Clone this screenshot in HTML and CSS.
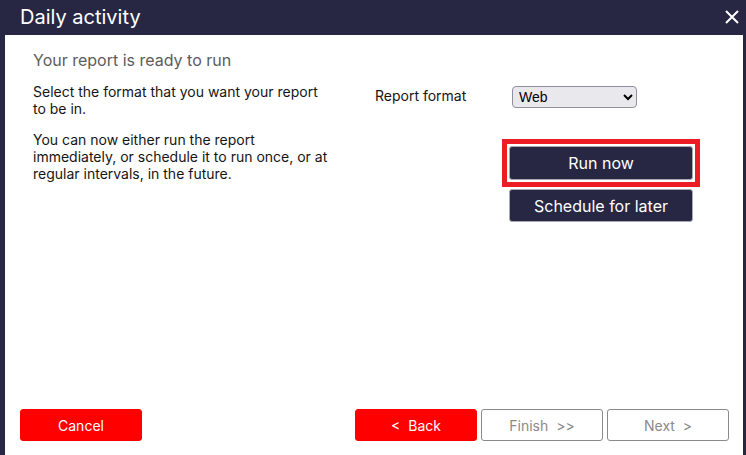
FILE: index.html
```html
<!DOCTYPE html>
<html lang="en">

<head>
    <meta charset="UTF-8">
    <meta name="viewport" content="width=device-width, initial-scale=1.0">
    <title>Daily activity</title>
    <link rel="stylesheet" href="styles.css">
</head>

<body>
    <div class="dialog">
        <div class="dialog-header">
            <h1 class="dialog-title">Daily activity</h1>
            <button class="close-btn" type="button" aria-label="Close">
                <svg width="14" height="14" viewBox="0 0 14 14">
                    <path d="M1 1 L13 13 M13 1 L1 13" stroke="#ffffff" stroke-width="2" fill="none" />
                </svg>
            </button>
        </div>

        <div class="dialog-body">
            <h2 class="step-title">Your report is ready to run</h2>

            <div class="row">
                <p class="row-text">Select the format that you want your report to be in.</p>
                <label class="field-label" for="format">Report format</label>
                <select id="format" class="format-select">
                    <option>Web</option>
                    <option>PDF</option>
                    <option>Excel</option>
                </select>
            </div>

            <div class="row">
                <p class="row-text">You can now either run the report immediately, or schedule it to run once, or at regular intervals, in the future.</p>
                <div class="run-actions">
                    <div class="highlight-box">
                        <button type="button" class="btn-dark">Run now</button>
                    </div>
                    <button type="button" class="btn-dark btn-schedule">Schedule for later</button>
                </div>
            </div>

            <div class="dialog-footer">
                <button type="button" class="btn btn-red">Cancel</button>
                <div class="nav-buttons">
                    <button type="button" class="btn btn-red">&lt;&nbsp; Back</button>
                    <button type="button" class="btn btn-disabled">Finish &nbsp;&gt;&gt;</button>
                    <button type="button" class="btn btn-disabled">Next &nbsp;&gt;</button>
                </div>
            </div>
        </div>
    </div>
</body>

</html>
```

FILE: styles.css
```css
* {
    box-sizing: border-box;
}

body {
    margin: 0;
    font-family: Inter, "Noto Sans", sans-serif;
    background-color: #272744;
}

.dialog {
    width: 746px;
    height: 455px;
    display: flex;
    flex-direction: column;
    background-color: #272744;
    padding: 0 3px 0 5px;
}

.dialog-header {
    height: 35px;
    display: flex;
    align-items: center;
    justify-content: space-between;
    padding: 0 4px 0 15px;
}

.dialog-title {
    margin: 0;
    color: #ffffff;
    font-size: 20px;
    font-weight: 400;
    line-height: 24px;
    padding-bottom: 1px;
}

.close-btn {
    background: none;
    border: none;
    padding: 0;
    width: 14px;
    height: 14px;
    display: flex;
    margin-top: -2px;
}

.dialog-body {
    flex: 1;
    background-color: #ffffff;
    display: flex;
    flex-direction: column;
    padding: 15px 14px 14px 28px;
}

.step-title {
    margin: 0 0 13px;
    font-size: 16px;
    font-weight: 400;
    line-height: 20px;
    color: #5c5c5c;
}

.row {
    display: flex;
    align-items: flex-start;
    margin-bottom: 14px;
}

.row-text {
    margin: 0;
    width: 342px;
    padding-right: 44px;
    font-size: 14px;
    line-height: 17px;
    color: #151515;
}

.field-label {
    width: 137px;
    margin-top: 4px;
    font-size: 14px;
    line-height: 17px;
    color: #151515;
}

.format-select {
    margin-top: 3px;
    width: 125px;
    height: 22px;
    font-family: "Liberation Sans", Arial, sans-serif;
    font-size: 14px;
    color: #000000;
    background-color: #e9e9ed;
    border: 1px solid #8f8f9d;
    border-radius: 4px;
    padding: 0 2px;
}

.run-actions {
    margin-top: 8px;
    margin-left: 127px;
    display: flex;
    flex-direction: column;
    align-items: flex-start;
    gap: 2px;
}

.highlight-box {
    border: 5px solid #ec1c24;
    padding: 2px;
    display: flex;
}

.btn-dark {
    width: 184px;
    height: 34px;
    background-color: #272744;
    color: #ffffff;
    border: 1px solid #a9a9b3;
    border-radius: 3px;
    font-family: Inter, sans-serif;
    font-size: 16px;
    cursor: pointer;
}

.btn-schedule {
    height: 33px;
    margin-left: 7px;
}

.dialog-footer {
    margin-top: auto;
    display: flex;
    justify-content: space-between;
    margin-left: -13px;
}

.nav-buttons {
    display: flex;
    gap: 4px;
}

.btn {
    width: 122px;
    height: 32px;
    border-radius: 3px;
    font-family: Inter, sans-serif;
    font-size: 14px;
    cursor: pointer;
}

.btn-red {
    background-color: #ff0000;
    border: 1px solid #ff0000;
    color: #ffffff;
}

.btn-disabled {
    background-color: #ffffff;
    border: 1px solid #8a8a8a;
    color: #8a8a8a;
}
```
